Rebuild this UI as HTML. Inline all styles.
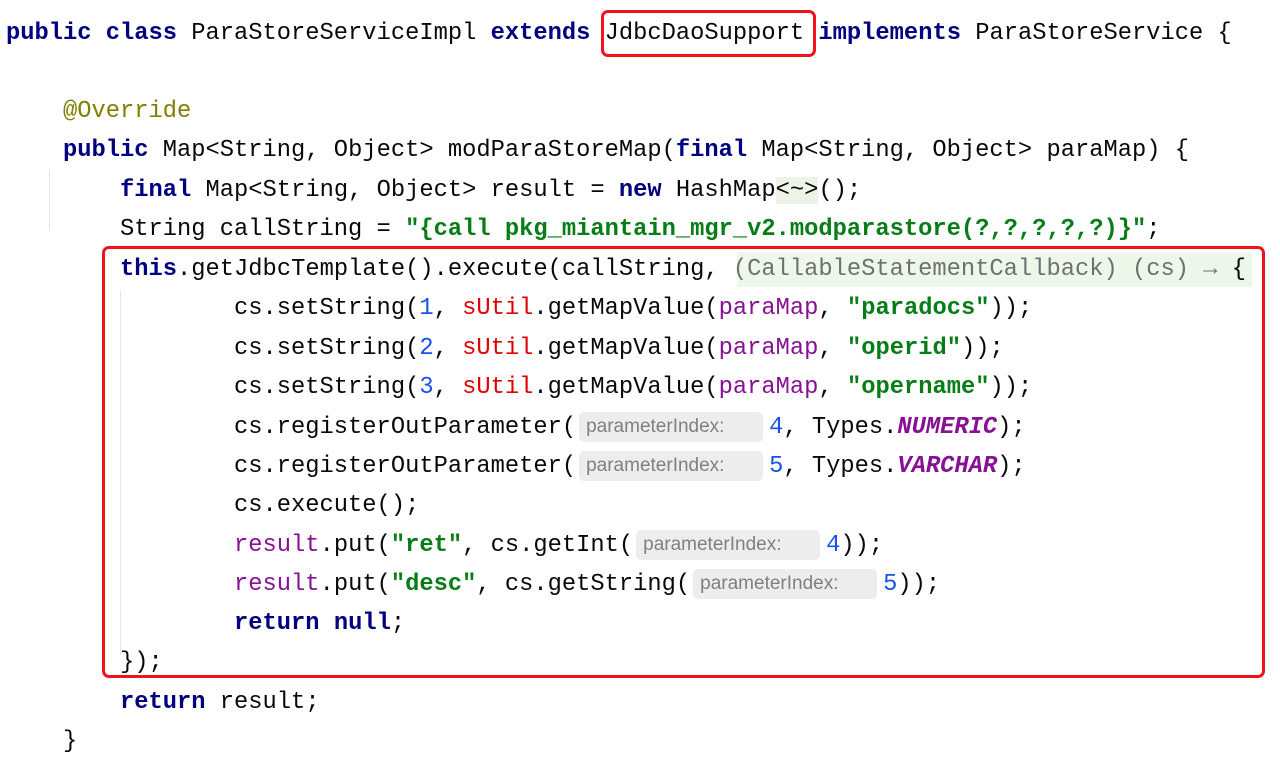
<!DOCTYPE html>
<html><head><meta charset="utf-8"><style>
body{margin:0;width:1280px;height:775px;background:#fff;position:relative;overflow:hidden;font-family:"Liberation Mono",monospace;font-size:23.75px;color:#080808}
.l{position:absolute;left:6px;height:39px;line-height:39px;white-space:pre}
.k{color:#0033b3;color:#000080;font-weight:bold}
.s{color:#067d17;font-weight:bold}
.n{color:#1750eb}
.r{color:#e00000}
.p{color:#871094}
.a{color:#808000}
.g{color:#9e880d}
.c{color:#871094;font-weight:bold;font-style:italic}
.h{display:inline-block;background:#ededed;color:#808080;font-family:"Liberation Sans",sans-serif;font-size:19px;border-radius:5px;height:30px;line-height:30px;vertical-align:middle;padding:0 7px;box-sizing:border-box;margin-right:6px;margin-left:3px}
.box{position:absolute;border:3.5px solid #f0141a;border-radius:7px;box-sizing:border-box}
.gl{position:absolute;width:1px;background:#dfe6ee}
</style></head><body>
<div style="position:absolute;left:737px;top:252px;width:515px;height:35px;background:#edf7ea"></div>
<div class="gl" style="left:49px;top:170px;height:60px"></div>
<div class="gl" style="left:120px;top:290px;height:365px"></div>
<div class="l" style="top:-25px;color:#aaa">  */</div>
<div class="l" style="top:14px"><span class="k">public class</span> ParaStoreServiceImpl <span class="k">extends</span> JdbcDaoSupport <span class="k">implements</span> ParaStoreService {</div>
<div class="l" style="top:92px">    <span class="a">@Override</span></div>
<div class="l" style="top:131px">    <span class="k">public</span> Map&lt;String, Object&gt; modParaStoreMap(<span class="k">final</span> Map&lt;String, Object&gt; paraMap) {</div>
<div class="l" style="top:171px">        <span class="k">final</span> Map&lt;String, Object&gt; result = <span class="k">new</span> HashMap<span style="background:#eef3e8">&lt;~&gt;</span>();</div>
<div class="l" style="top:210px">        String callString = <span class="s">"{call pkg_miantain_mgr_v2.modparastore(?,?,?,?,?)}"</span>;</div>
<div class="l" style="top:250px">        <span class="k">this</span>.getJdbcTemplate().execute(callString, <span style="color:#707070">(CallableStatementCallback) (cs) → </span>{</div>
<div class="l" style="top:289px">                cs.setString(<span class="n">1</span>, <span class="r">sUtil</span>.getMapValue(<span class="p">paraMap</span>, <span class="s">"paradocs"</span>));</div>
<div class="l" style="top:329px">                cs.setString(<span class="n">2</span>, <span class="r">sUtil</span>.getMapValue(<span class="p">paraMap</span>, <span class="s">"operid"</span>));</div>
<div class="l" style="top:368px">                cs.setString(<span class="n">3</span>, <span class="r">sUtil</span>.getMapValue(<span class="p">paraMap</span>, <span class="s">"opername"</span>));</div>
<div class="l" style="top:408px">                cs.registerOutParameter(<span class="h" style="width:184px">parameterIndex:</span><span class="n">4</span>, Types.<span class="c">NUMERIC</span>);</div>
<div class="l" style="top:447px">                cs.registerOutParameter(<span class="h" style="width:184px">parameterIndex:</span><span class="n">5</span>, Types.<span class="c">VARCHAR</span>);</div>
<div class="l" style="top:486px">                cs.execute();</div>
<div class="l" style="top:526px">                <span class="p">result</span>.put(<span class="s">"ret"</span>, cs.getInt(<span class="h" style="width:184px">parameterIndex:</span><span class="n">4</span>));</div>
<div class="l" style="top:565px">                <span class="p">result</span>.put(<span class="s">"desc"</span>, cs.getString(<span class="h" style="width:184px">parameterIndex:</span><span class="n">5</span>));</div>
<div class="l" style="top:604px">                <span class="k">return null</span>;</div>
<div class="l" style="top:643px">        });</div>
<div class="l" style="top:683px">        <span class="k">return</span> result;</div>
<div class="l" style="top:722px">    }</div>
<div class="box" style="left:601px;top:10px;width:215px;height:47px"></div>
<div class="box" style="left:102px;top:246px;width:1163px;height:432px"></div>
</body></html>
